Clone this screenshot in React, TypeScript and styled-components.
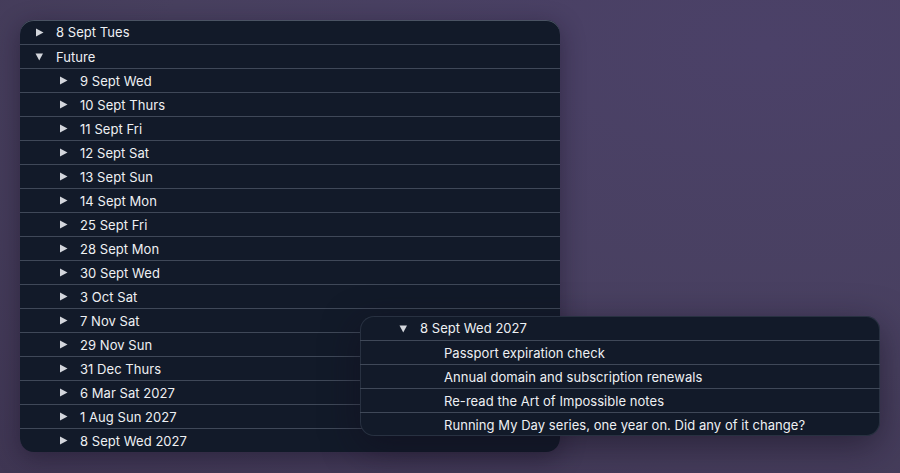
import React from 'react'
import styled, { createGlobalStyle } from 'styled-components'

const GlobalStyle = createGlobalStyle`
  html, body {
    margin: 0;
    padding: 0;
  }
  body {
    width: 900px;
    height: 473px;
    overflow: hidden;
    background: radial-gradient(ellipse at 85% 10%, #4b4168 0%, #48405f 55%, #3f3653 100%);
    font-family: Inter, 'Noto Sans', sans-serif;
    -webkit-font-smoothing: antialiased;
  }
`

const Stage = styled.div`
  position: relative;
  width: 900px;
  height: 473px;
  padding: 20px;
  box-sizing: border-box;
`

const Panel = styled.div`
  width: 540px;
  background: #121a29;
  border-radius: 14px;
  overflow: hidden;
  box-shadow: inset 0 1px 0 #4a5363, 0 6px 24px rgba(20, 14, 34, 0.45);
`

const Popup = styled.div`
  position: absolute;
  left: 360px;
  top: 316px;
  width: 520px;
  background: #121a29;
  border-radius: 14px;
  overflow: hidden;
  box-shadow: inset 0 0 0 1px rgba(120, 130, 150, 0.22), 0 10px 36px rgba(18, 12, 30, 0.55);
`

const Row = styled.div<{ $indent: number }>`
  display: flex;
  align-items: center;
  height: 24px;
  box-sizing: border-box;
  padding-left: ${p => p.$indent}px;
  color: #eef0f3;
  font-size: 13px;
  letter-spacing: 0.05px;
  white-space: nowrap;

  & + & {
    border-top: 1px solid #3f4858;
  }
`

const Toggle = styled.span`
  width: 21px;
  display: flex;
  align-items: center;
  color: #d3d6dc;
  flex-shrink: 0;
`

const Label = styled.span`
  line-height: 24px;
`

const Arrow = ({ open }: { open?: boolean }) => (
  <Toggle>
    <svg width="9" height="9" viewBox="0 0 9 9">
      {open ? (
        <path d="M0.5 1.5 L8 1.5 L4.25 8.5 Z" fill="currentColor" />
      ) : (
        <path d="M1 0.5 L8.5 4.5 L1 8.5 Z" fill="currentColor" />
      )}
    </svg>
  </Toggle>
)

const futureDays = [
  '9 Sept Wed',
  '10 Sept Thurs',
  '11 Sept Fri',
  '12 Sept Sat',
  '13 Sept Sun',
  '14 Sept Mon',
  '25 Sept Fri',
  '28 Sept Mon',
  '30 Sept Wed',
  '3 Oct Sat',
  '7 Nov Sat',
  '29 Nov Sun',
  '31 Dec Thurs',
  '6 Mar Sat 2027',
  '1 Aug Sun 2027',
  '8 Sept Wed 2027',
]

const notes = [
  'Passport expiration check',
  'Annual domain and subscription renewals',
  'Re-read the Art of Impossible notes',
  'Running My Day series, one year on. Did any of it change?',
]

const App = () => {
  return (
    <>
      <GlobalStyle />
      <Stage>
        <Panel>
          <Row $indent={15}>
            <Arrow />
            <Label>8 Sept Tues</Label>
          </Row>
          <Row $indent={15}>
            <Arrow open />
            <Label>Future</Label>
          </Row>
          {futureDays.map(day => (
            <Row key={day} $indent={39}>
              <Arrow />
              <Label>{day}</Label>
            </Row>
          ))}
        </Panel>

        <Popup>
          <Row $indent={39}>
            <Arrow open />
            <Label>8 Sept Wed 2027</Label>
          </Row>
          {notes.map(note => (
            <Row key={note} $indent={84}>
              <Label>{note}</Label>
            </Row>
          ))}
        </Popup>
      </Stage>
    </>
  )
}

export default App
